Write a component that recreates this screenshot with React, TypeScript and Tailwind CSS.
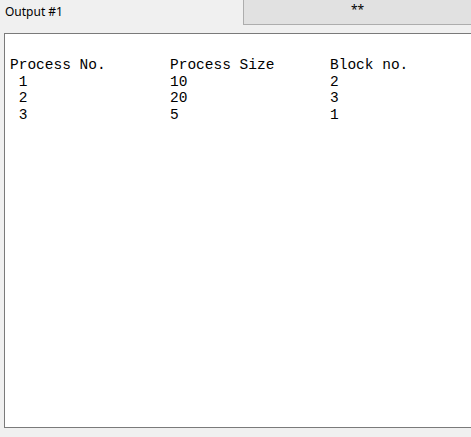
import React from 'react';

const rows = [
  { no: ' 1', size: '10', block: '2' },
  { no: ' 2', size: '20', block: '3' },
  { no: ' 3', size: '5', block: '1' },
];

export default function App() {
  return (
    <div className="w-[471px] h-[437px] bg-[#f0f0f0] overflow-hidden flex flex-col">
      {/* Header strip */}
      <div className="flex h-[25px]">
        <div className="w-[243px] pl-[5px] pt-[4px] text-[12px] leading-[16px] text-black font-['Noto_Sans',sans-serif]">
          Output #1
        </div>
        <div className="flex-1 flex justify-center pt-[3px] bg-[#e1e1e1] border-l border-b border-[#adadad] text-[12px] leading-[14px] text-black font-['Noto_Sans',sans-serif]">
          **
        </div>
      </div>

      {/* Output box */}
      <div className="mt-[8px] ml-[4px] w-[480px] h-[395px] bg-white border border-[#7a7a7a] pt-[23px] pl-[5px]">
        <div className="font-['Liberation_Mono',monospace] text-[14.5px] leading-[16.5px] text-black whitespace-pre">
          <div className="grid grid-cols-[160px_160px_160px]">
            <span>Process No.</span>
            <span>Process Size</span>
            <span>Block no.</span>
          </div>
          {rows.map((r) => (
            <div key={r.no} className="grid grid-cols-[160px_160px_160px]">
              <span>{r.no}</span>
              <span>{r.size}</span>
              <span>{r.block}</span>
            </div>
          ))}
        </div>
      </div>
    </div>
  );
}
